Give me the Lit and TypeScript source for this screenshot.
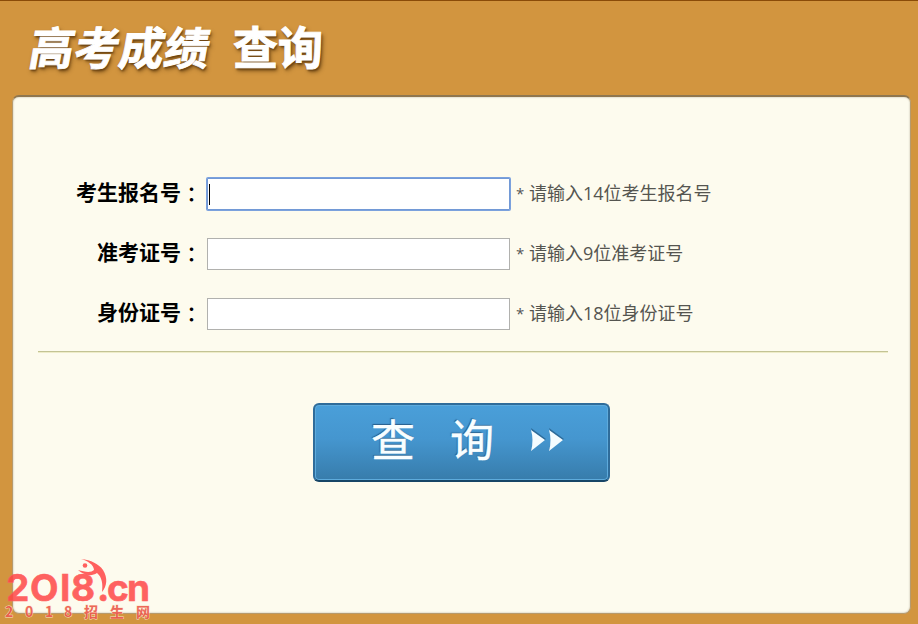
import { html, css, LitElement } from 'lit';
import { customElement, property } from 'lit/decorators.js';
import { classMap } from 'lit/directives/class-map.js';

@customElement('score-field')
class ScoreField extends LitElement {

  @property({ type: String }) label = '';
  @property({ type: String }) hint = '';
  @property({ type: Boolean }) active = false;

  static styles = css`
    :host {
      display: flex;
      align-items: center;
      height: 32px;
    }

    .label {
      width: 190px;
      height: 32px;
      margin-top: -7px;
      text-align: right;
      font-size: 21px;
      font-weight: 700;
      line-height: 32px;
      color: #000;
      white-space: nowrap;
    }

    /* the TC face centres the full-width colon in its cell */
    .colon {
      position: relative;
      top: 2px;
      font-family: 'Noto Sans CJK TC', sans-serif;
      font-weight: 500;
    }

    .box {
      display: flex;
      align-items: center;
      box-sizing: border-box;
      width: 303px;
      height: 32px;
      margin-left: 5px;
      border: 1px solid #b1b1ae;
      background: #fff;
    }

    .box.active {
      border-color: #7299d6;
      border-radius: 1px;
      box-shadow: 0 0 0 1px #7ba1dd;
    }

    .caret {
      width: 1px;
      height: 21px;
      margin-left: 1px;
      background: #000;
    }

    input {
      flex: 1;
      min-width: 0;
      height: 100%;
      padding: 0 2px;
      border: 0;
      outline: 0;
      background: transparent;
      font: inherit;
      font-size: 18px;
    }

    .star {
      width: 13px;
      margin: -3px 0 0 6px;
      font-family: 'Open Sans', sans-serif;
      font-size: 15px;
      color: #555;
    }

    .hint {
      height: 32px;
      margin-top: -2px;
      font-family: 'Open Sans', 'Noto Sans CJK SC', sans-serif;
      font-size: 18px;
      font-weight: 400;
      line-height: 32px;
      color: #555550;
      white-space: nowrap;
    }
  `;

  render() {
    return html`
      <label class="label">${this.label}<span class="colon">：</span></label>
      <div class=${classMap({ box: true, active: this.active })}>
        ${this.active ? html`<span class="caret"></span>` : ''}
        <input type="text" aria-label=${this.label}>
      </div>
      <span class="star">*</span>
      <span class="hint">${this.hint}</span>
    `;
  }
}

@customElement('site-mark')
class SiteMark extends LitElement {

  static styles = css`
    :host {
      display: block;
      width: 160px;
      height: 70px;
    }

    svg {
      display: block;
    }

    .name {
      font-family: 'Inter', sans-serif;
      font-weight: 700;
      font-size: 37px;
      stroke: #ff6461;
      stroke-width: 0.6px;
    }

    .caption {
      font-family: 'Noto Sans CJK SC', sans-serif;
      font-weight: 700;
      font-size: 14px;
      fill: #ea5044;
      paint-order: stroke;
      stroke: #fbe3c4;
      stroke-width: 0.8px;
    }
  `;

  render() {
    return html`
      <svg width="160" height="70" viewBox="0 0 160 70" fill="#ff4646" fill-opacity="0.86">
        <text class="name" x="6 30 60 71 97 107 127" y="47">2OI8.cn</text>
        <circle cx="85" cy="11.5" r="2.3" />
        <path d="M81 5C91 6 99 10 103 16C108 24 107 32 102 38C103 30 102 23 97 19C91 23 84 21 78 16C85 18 91 19 94 16C94 11 88 7 81 5Z" />
        <text class="caption" x="5 25 45 64 84 110 136" y="63">2018招生网</text>
      </svg>
    `;
  }
}

@customElement('app-root')
class AppRoot extends LitElement {

  static styles = css`
    :host {
      display: flex;
      flex-direction: column;
      position: relative;
      box-sizing: border-box;
      width: 918px;
      height: 624px;
      padding: 0 7px 10px 12px;
      overflow: hidden;
      border-top: 1px solid #8a4b08;
      background: #d2953f;
      font-family: 'Noto Sans CJK SC', sans-serif;
    }

    .title {
      display: flex;
      gap: 24px;
      box-sizing: border-box;
      height: 94px;
      margin: 0;
      padding: 12px 0 0 17px;
      font-size: 45px;
      font-weight: 700;
      line-height: 66px;
      color: #fff;
      -webkit-text-stroke: 0.9px #fff;
      text-shadow: 1px 2px 2px #6b4312, 2px 3px 4px rgba(70, 40, 5, 0.6);
    }

    .slanted {
      transform: skewX(-10deg);
    }

    .panel {
      flex: 1;
      display: flex;
      flex-direction: column;
      box-sizing: border-box;
      padding: 81px 22px 0 25px;
      border: 1px solid #b79a6c;
      border-top: 2px solid #8f7750;
      border-radius: 7px;
      background: #fdfbee;
      box-shadow: inset 0 0 2px #b5ad98;
    }

    .fields {
      display: flex;
      flex-direction: column;
      gap: 28px;
      margin-left: -26px;
      padding-bottom: 21px;
    }

    .rule {
      height: 1px;
      background: #c3c394;
      box-shadow: 0 1px 0 #eeecc8;
    }

    .submit {
      display: flex;
      align-items: center;
      align-self: flex-start;
      box-sizing: border-box;
      width: 297px;
      height: 79px;
      margin: 51px 0 0 275px;
      padding: 0 0 8px 56px;
      border: 2px solid #2f6c9a;
      border-bottom-color: #174566;
      border-radius: 6px;
      background: linear-gradient(#4a9fd9, #4596cf 45%, #377cab);
      box-shadow: inset 0 0 0 1px #5eabdc;
      font-family: inherit;
      font-size: 44px;
      line-height: 60px;
      color: #f8feff;
      -webkit-text-stroke: 0.4px #f8feff;
      text-shadow: -1px -1px 1px #285f8b;
    }

    .word {
      display: flex;
      gap: 35px;
      margin-top: -1px;
    }

    .arrows {
      margin: 2px 0 0 36px;
    }

    .mark {
      position: absolute;
      left: 0;
      bottom: 0;
    }
  `;

  fields = [
    { label: '考生报名号', hint: '请输入14位考生报名号', active: true },
    { label: '准考证号', hint: '请输入9位准考证号', active: false },
    { label: '身份证号', hint: '请输入18位身份证号', active: false }
  ];

  render() {
    return html`
      <h1 class="title"><span class="slanted">高考成绩</span><span>查询</span></h1>
      <div class="panel">
        <div class="fields">
          ${this.fields.map(field => html`
            <score-field
              .label=${field.label}
              .hint=${field.hint}
              .active=${field.active}
            ></score-field>
          `)}
        </div>
        <div class="rule"></div>
        <button class="submit">
          <span class="word"><span>查</span><span>询</span></span>
          <svg class="arrows" width="36" height="26" viewBox="0 0 36 26">
            <path d="M1 1L16 12L1 23Q6 12 1 1ZM19 1L34 12L19 23Q24 12 19 1Z" fill="#2d6b99" />
            <path d="M1 3L15 13L1 24Q4 13 1 3ZM19 3L33 13L19 24Q22 13 19 3Z" fill="#f4fcff" />
          </svg>
        </button>
      </div>
      <site-mark class="mark"></site-mark>
    `;
  }
}
